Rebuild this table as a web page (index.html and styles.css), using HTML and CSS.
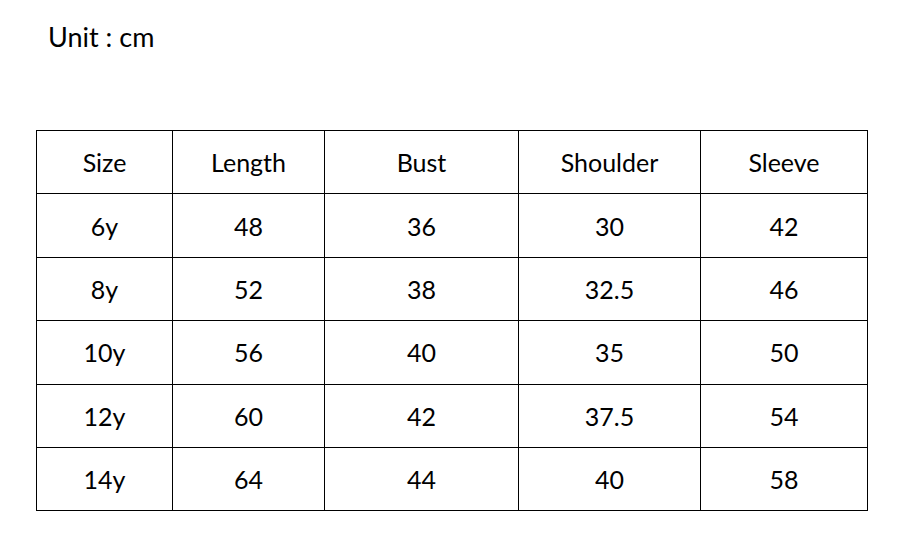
FILE: index.html
```html
<!DOCTYPE html>
<html>
<head>
<meta charset="utf-8">
<link rel="stylesheet" href="styles.css">
</head>
<body>
<div class="page">
  <div class="unit">Unit : cm</div>
  <table class="sizes">
    <colgroup>
      <col class="c1"><col class="c2"><col class="c3"><col class="c4"><col class="c5">
    </colgroup>
    <tr><td>Size</td><td>Length</td><td>Bust</td><td>Shoulder</td><td>Sleeve</td></tr>
    <tr><td>6y</td><td>48</td><td>36</td><td>30</td><td>42</td></tr>
    <tr><td>8y</td><td>52</td><td>38</td><td>32.5</td><td>46</td></tr>
    <tr><td>10y</td><td>56</td><td>40</td><td>35</td><td>50</td></tr>
    <tr><td>12y</td><td>60</td><td>42</td><td>37.5</td><td>54</td></tr>
    <tr><td>14y</td><td>64</td><td>44</td><td>40</td><td>58</td></tr>
  </table>
</div>
</body>
</html>
```
FILE: styles.css
```css
html, body {
  margin: 0;
  padding: 0;
  background: #ffffff;
}
.page {
  padding: 20px 0 0 36px;
  font-family: "Lato", "Open Sans", sans-serif;
  color: #000;
}
.unit {
  font-size: 27px;
  line-height: 34px;
  margin-left: 12px;
  height: 110px;
}
.sizes {
  border-collapse: collapse;
  table-layout: fixed;
  font-size: 25px;
}
.sizes td {
  border: 1px solid #000;
  text-align: center;
  vertical-align: middle;
  height: 62.4px;
  padding: 0;
}
.c1 { width: 136px; }
.c2 { width: 152px; }
.c3 { width: 194px; }
.c4 { width: 182px; }
.c5 { width: 167px; }
```
